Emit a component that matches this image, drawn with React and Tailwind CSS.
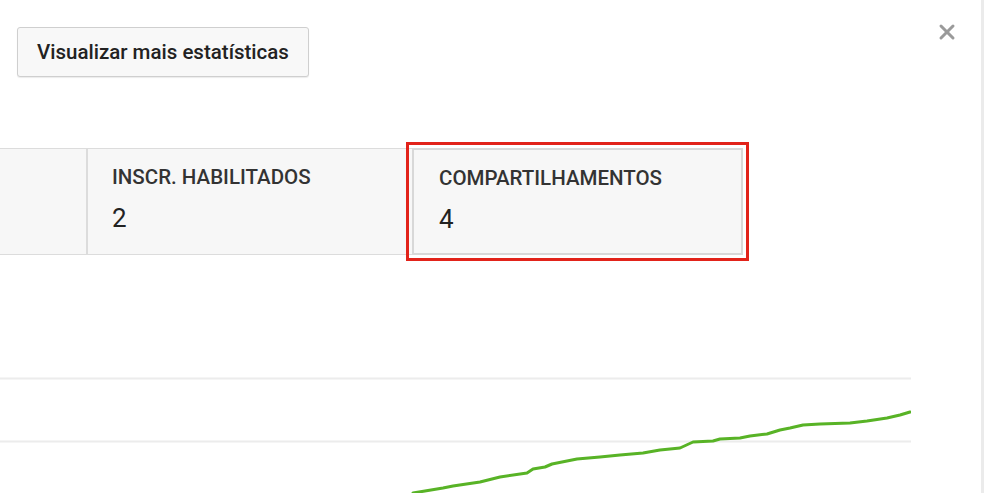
import { X } from "lucide-react";

// page-space points of the subscriber curve (y is offset by the chart top)
const CHART_TOP = 353;
const points = [
  [413, 493], [443, 488], [453, 486], [480, 482], [500, 477], [527, 473],
  [533, 469], [545, 467], [552, 464], [577, 459], [600, 457], [620, 455],
  [643, 453], [660, 450], [680, 448], [693, 442], [713, 441], [720, 439],
  [740, 438], [750, 436], [767, 434], [780, 430], [790, 428], [803, 425],
  [820, 424], [850, 423], [867, 421], [887, 418], [900, 415], [910, 412],
];

function StatCell({ label, value, className = "" }) {
  return (
    <div className={"bg-[#f7f7f7] pt-[16px] " + className}>
      <p className="text-[20.5px] leading-[24px] font-medium text-[#333]">{label}</p>
      <p className="mt-[14px] text-[26px] leading-[30px] text-[#222]">{value}</p>
    </div>
  );
}

export default function App() {
  const d = points.map(([x, y], i) => `${i ? "L" : "M"}${x} ${y - CHART_TOP}`).join(" ");

  return (
    <div
      className="flex h-[493px] w-[984px] overflow-hidden bg-white"
      style={{ fontFamily: "Roboto, 'Liberation Sans', sans-serif" }}
    >
      <div className="relative flex-1">
        <button
          type="button"
          className="absolute right-[22px] top-[20px] text-[#9a9a9a]"
          aria-label="Fechar"
        >
          <X size={24} strokeWidth={3} />
        </button>

        <div className="pt-[27px] pl-[17px]">
          <button
            type="button"
            className="h-[50px] rounded-[3px] border border-[#cfcfcf] bg-[#f8f8f8] px-[19px] text-[20.5px] font-medium text-[#222] shadow-[0_1px_1px_rgba(0,0,0,0.08)]"
          >
            Visualizar mais estatísticas
          </button>
        </div>

        <div className="mt-[71px] flex h-[107px] w-fit border-y border-[#dcdcdc]">
          <div className="w-[88px] shrink-0 border-r-2 border-[#dcdcdc] bg-[#f7f7f7]" />
          <StatCell
            label="INSCR. HABILITADOS"
            value="2"
            className="w-[324px] shrink-0 pl-[24px]"
          />
          <StatCell
            label="COMPARTILHAMENTOS"
            value="4"
            className="-my-px h-[107px] w-[331px] shrink-0 border-2 border-[#d8d8d8] pl-[25px] outline-[3px] outline-[#e2231a] outline-offset-[3px] outline"
          />
        </div>

        <svg width="911" height="140" className="mt-[98px] block" viewBox="0 0 911 140">
          <line x1="0" y1="25.5" x2="911" y2="25.5" stroke="#ececec" strokeWidth="2" />
          <line x1="0" y1="88.5" x2="911" y2="88.5" stroke="#ececec" strokeWidth="2" />
          <path d={d} fill="none" stroke="#58b326" strokeWidth="3" strokeLinejoin="round" strokeLinecap="round" />
        </svg>
      </div>
      <div className="w-[3px] shrink-0 bg-[#ebebeb]" />
    </div>
  );
}
